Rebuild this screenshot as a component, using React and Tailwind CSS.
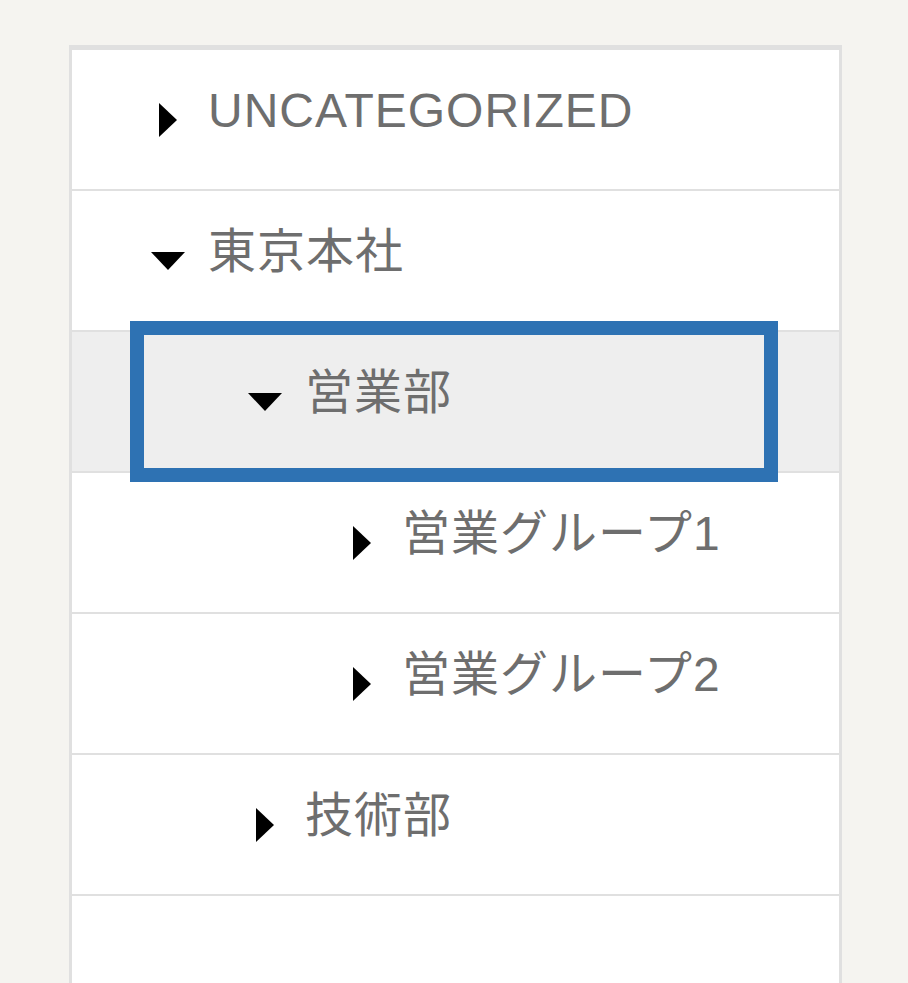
import React from 'react';

const nodes = [
  { label: 'UNCATEGORIZED', level: 0, open: false },
  { label: '東京本社', level: 0, open: true },
  { label: '営業部', level: 1, open: true, selected: true },
  { label: '営業グループ1', level: 2, open: false },
  { label: '営業グループ2', level: 2, open: false },
  { label: '技術部', level: 1, open: false },
];

const indents = ['pl-[78px]', 'pl-[175px]', 'pl-[272px]'];

const Caret = ({ open }) => (
  <div className="w-[36px] h-[36px] flex items-center justify-center flex-shrink-0">
    {open ? (
      <div className="w-0 h-0 border-t-[18px] border-t-black border-x-[17px] border-x-transparent" />
    ) : (
      <div className="w-0 h-0 border-l-[18px] border-l-black border-y-[17px] border-y-transparent" />
    )}
  </div>
);

const TreeRow = ({ node }) => {
  const inner = (
    <div className="flex items-center gap-[22px] h-full">
      <Caret open={node.open} />
      <span className="pb-[18px] whitespace-nowrap tracking-[1px]">{node.label}</span>
    </div>
  );

  if (node.selected) {
    return (
      <div className="h-[141px] border-b-[2px] border-[#e0e0e0] bg-[#eeeeee] pt-[3px]">
        {/* focus ring sits over the neighbouring rows */}
        <div className="relative z-10 ml-[72px] w-[620px] h-[133px] outline-[14px] outline-solid outline-[#2e72b3] pl-[103px]">
          {inner}
        </div>
      </div>
    );
  }

  return (
    <div className={`h-[141px] border-b-[2px] border-[#e0e0e0] bg-white ${indents[node.level]}`}>
      {inner}
    </div>
  );
};

export default function App() {
  return (
    <div
      className="h-[983px] overflow-hidden bg-[#f5f4f0] pt-[45px] pl-[69px]"
      style={{ fontFamily: '"Liberation Sans", "Noto Sans CJK JP", sans-serif' }}
    >
      <div className="w-[773px] h-full flex flex-col bg-white border-x-[3px] border-t-[5px] border-[#e0e0e0] text-[48px] leading-none text-[#6e6e6e]">
        {nodes.map((n) => (
          <TreeRow key={n.label} node={n} />
        ))}
        <div className="flex-1 bg-white" />
      </div>
    </div>
  );
}
